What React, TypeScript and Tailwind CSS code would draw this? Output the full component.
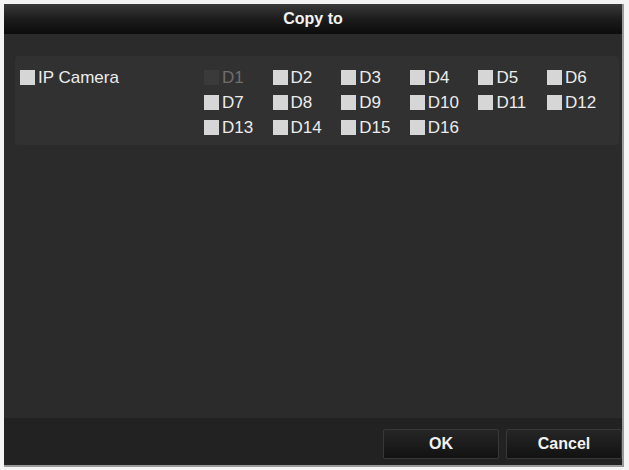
import React from "react";

const Box = ({ disabled }: { disabled?: boolean }) => (
  <span
    className={
      "inline-block w-[15px] h-[15px] shrink-0 " +
      (disabled ? "bg-[#3a3a3a]" : "bg-[#d6d6d6]")
    }
  />
);

const Item = ({ label, disabled }: { label: string; disabled?: boolean }) => (
  <div className="flex items-center h-[15px] gap-[3px]">
    <Box disabled={disabled} />
    <span
      className={
        "text-[17px] leading-none " + (disabled ? "text-[#6e6e6e]" : "text-[#ececec]")
      }
    >
      {label}
    </span>
  </div>
);

export default function App() {
  const items = Array.from({ length: 16 }, (_, i) => `D${i + 1}`);
  return (
    <div
      className="w-[629px] h-[470px] bg-[#f4f4f4] pt-[4px] pl-[4px]"
      style={{ fontFamily: '"Liberation Sans", Arial, sans-serif' }}
    >
      <div className="w-[620px] h-[463px] flex flex-col bg-[#2b2b2b] border-r-[2px] border-b-[2px] border-[#9a9a9a]">
        <div className="h-[30px] shrink-0 flex items-center justify-center bg-gradient-to-b from-[#3a3a3a] via-[#1c1c1c] to-[#0c0c0c] text-[#f2f2f2] text-[16px] font-bold">
          Copy to
        </div>
        <div className="flex-1 pt-[22px] pl-[11px] pr-[3px]">
          <div className="h-[89px] rounded-[4px] bg-[#313131] flex pt-[14px] pl-[5px]">
            <div className="w-[184px]">
              <Item label="IP Camera" />
            </div>
            <div className="grid grid-cols-[repeat(6,68.6px)] gap-y-[10px] content-start">
              {items.map((d, i) => (
                <Item key={d} label={d} disabled={i === 0} />
              ))}
            </div>
          </div>
        </div>
        <div className="h-[47px] shrink-0 bg-[#222222] flex items-start justify-end gap-[7px] pt-[11px]">
          <button className="w-[116px] h-[30px] rounded-[2px] bg-gradient-to-b from-[#262626] to-[#121212] border border-[#383838] text-[#f2f2f2] text-[16px] font-bold">
            OK
          </button>
          <button className="w-[116px] h-[30px] rounded-[2px] bg-gradient-to-b from-[#262626] to-[#121212] border border-[#383838] text-[#f2f2f2] text-[16px] font-bold">
            Cancel
          </button>
        </div>
      </div>
    </div>
  );
}
